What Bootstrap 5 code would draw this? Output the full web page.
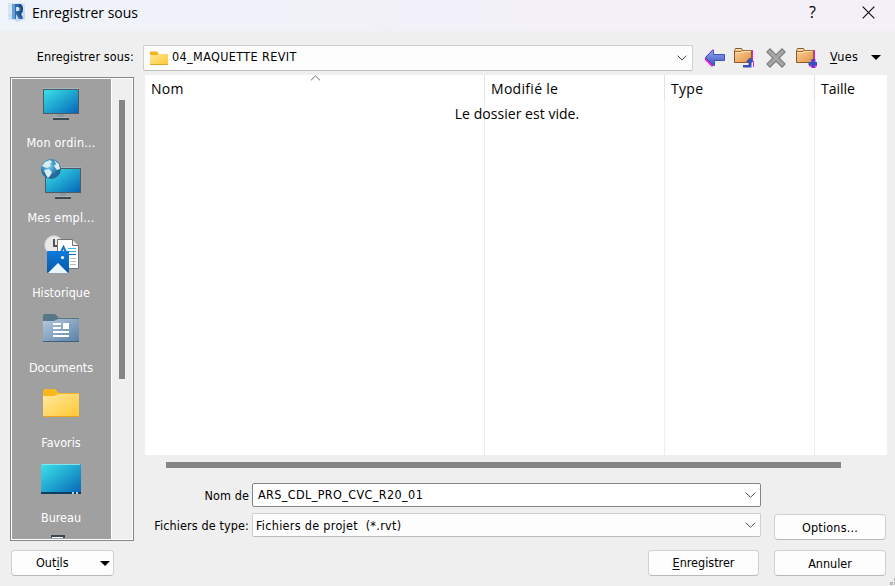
<!DOCTYPE html>
<html lang="fr">
<head>
<meta charset="utf-8">
<title>Enregistrer sous</title>
<link href="https://cdn.jsdelivr.net/npm/bootstrap@5.3.0/dist/css/bootstrap.min.css" rel="stylesheet">
<style>
body{width:895px;height:586px;background:#efefef;color:#000;font:12.5px/16px "DejaVu Sans Condensed","DejaVu Sans",sans-serif;font-stretch:condensed}
svg{display:block;flex:none}
u{text-underline-offset:2px}
.titlebar{height:31px;background:linear-gradient(90deg,#eff3fa,#f3f0f8 60%);font:14px/20px "Open Sans",sans-serif;padding-left:8px}
.titlebar .caption{margin:3px 0 0 7px}
.titlebar .help{font-size:16px;margin:2px 46px 0 0}
.pathrow{height:44px;padding-top:14px}
.lbl{text-align:right;white-space:nowrap}
.pathrow .lbl{width:134px;margin-right:9px;letter-spacing:.13px}
.combo{background:#fdfdfd;border:1px solid #cfcfcf;border-bottom-color:#bdbdbd;border-radius:2px;white-space:pre}
.path{width:550px;height:26px;padding:0 5px}
.pathtext{margin:-3px auto 0 3px;letter-spacing:.38px}
.tools{padding-left:10px}
.tools .views{margin:4px 0 0 12px;letter-spacing:.4px}
.side{width:134px;padding:2px 0 0 10px}
.places{width:124px;height:464px;border:1px solid #828790;padding:1px;background:#fff}
.placelist{width:99px;height:460px;background:#a0a0a0;color:#fff;overflow:hidden;margin-right:1px;padding-right:1px;flex:none}
.place{height:75px;flex:none;padding-top:1px}
.place span{margin-top:6px;line-height:17px}
.wider{letter-spacing:.2px}
.vtrack{width:20px;background:#efefef;padding:21px 0 0 7px}
.vthumb{width:6px;height:279px;background:#858585}
.files{width:742px;height:380px;background:#fff;margin-left:11px;font:14px/20px "Open Sans",sans-serif;letter-spacing:.3px;position:relative}
.filecol{padding:4px 6px}
.ruled{border-right:1px solid;border-image:linear-gradient(#e2e2e2 26px,#e6f0fa 26px) 1}
.empty{position:absolute;left:2px;right:0;top:29px;text-align:center;letter-spacing:.04px}
.sort{position:absolute;left:165px;top:0}
.hbar{width:675px;height:6px;background:#858585;margin:7px 0 15px 32px}
.fieldrow .lbl{width:115px;margin-right:3px;letter-spacing:.12px}
.fieldrow .lbl,.typetext{padding-top:1px}
.field{width:509px;height:24px;padding:0 4px 0 3px}
.name{background:#fff;border-color:#868686}
.nametext{margin-left:2px;letter-spacing:.38px}
.typetext{letter-spacing:.3px}
.push{--bs-btn-bg:#fdfdfd;--bs-btn-border-color:#d0d0d0;--bs-btn-color:#000;--bs-btn-border-radius:4px;font-size:12.5px;line-height:16px;padding:0;height:26px;border-bottom-color:#b9b9b9}
.wide{width:112px;padding-top:2px}
.footerrow{padding:9px 9px 0 11px}
.grip{position:absolute;right:0;bottom:0}
</style>
<script src="https://cdn.jsdelivr.net/npm/bootstrap@5.3.0/dist/js/bootstrap.bundle.min.js"></script>
</head>
<body class="overflow-hidden position-relative m-0">
<svg width="0" height="0" class="position-absolute">
<defs>
<linearGradient id="screen" x1="0" y1="0" x2="1" y2="1"><stop stop-color="#3de2e8"/><stop offset=".5" stop-color="#1fa5d0"/><stop offset="1" stop-color="#0564b8"/></linearGradient>
<linearGradient id="yellow" x1="0" y1="0" x2="1" y2="1"><stop stop-color="#ffe8a0"/><stop offset="1" stop-color="#ffc830"/></linearGradient>
<linearGradient id="slate" x1="0" y1="0" x2="1" y2="1"><stop stop-color="#b4c9dd"/><stop offset="1" stop-color="#5a7fa6"/></linearGradient>
<linearGradient id="photo" x1="0" y1="0" x2="0" y2="1"><stop stop-color="#0c7bdc"/><stop offset="1" stop-color="#0858a8"/></linearGradient>
<linearGradient id="arrow" x1="0" y1="0" x2="0" y2="1"><stop stop-color="#91a4ee"/><stop offset="1" stop-color="#3a55bf"/></linearGradient>
<linearGradient id="tan" x1="0" y1="0" x2="1" y2="1"><stop stop-color="#ffd59a"/><stop offset="1" stop-color="#df9147"/></linearGradient>
<radialGradient id="earth" cx=".4" cy=".35"><stop stop-color="#86cdf0"/><stop offset=".6" stop-color="#3c96c8"/><stop offset="1" stop-color="#266a96"/></radialGradient>
<g id="monitor"><path fill="#a5b6c0" d="M6 8h36v1H6z"/><path fill="#8b979f" d="M21 34h6v3h-6z"/><rect x="6.5" y="9.500" width="35" height="24" fill="url(#screen)" stroke="#4d5b66"/><path fill="#a9b3ba" d="M16 37h16v1H16z"/><path fill="#3d4951" d="M16 38h16v2H16z"/></g>
<g id="tanfolder"><path fill="#e51be8" d="M18 3h1v12h-1z"/><path d="M.5 15.500V3.500l1-2h6l1 2h9v12z" fill="url(#tan)" stroke="#8a592b"/><path d="M1.500 5.500h6l2-1h7M2 2.500h5" fill="none" stroke="#ffe3b8"/><path d="M1 4.500h6l1-1h9" fill="none" stroke="#a46b35"/></g>
</defs>
</svg>

<header class="titlebar d-flex align-items-start">
  <svg width="17" height="19" style="margin-top:3px"><rect width="17" height="17" fill="#d5e5f6"/><path d="M0 12l9 7 8-3V8z" fill="#c5daef"/><path fill-rule="evenodd" fill="#2c6aa9" d="M4 1h7c3 0 4 2 4 5 0 2-1 4-3 5l3 5h-4l-3-5H8v5H4zM8 4v4h2c2 0 2-4 0-4z"/><path fill="#1f4c82" d="M11 1c5 0 5 8 2 10l2 4-2-1-3-4c4-1 4-6 1-6z"/><path fill="#66a1d4" d="M4 1h3v15H4z"/></svg>
  <span class="caption">Enregistrer sous</span>
  <span class="help ms-auto">?</span>
  <svg width="13" height="13" style="margin:6px 20px 0 0"><path d="M.7.700l11.600 11.600M12.300.700L.700 12.300" stroke="#111" stroke-width="1.200"/></svg>
</header>

<div class="pathrow d-flex">
  <label class="lbl pt-1">Enregistrer sous:</label>
  <div class="combo path d-flex align-items-center">
    <svg width="20" height="16"><path d="M1 15V2h7l2 2h9v11z" fill="url(#yellow)"/><path d="M1 5V1.500h7l1.500 2L8 5z" fill="#f7b31b"/><path d="M1 14.500h18" stroke="#e5a52b"/></svg>
    <span class="pathtext">04_MAQUETTE REVIT</span>
    <svg width="10" height="6"><path d="M.7.700L5 5 9.300.700" fill="none" stroke="#505050"/></svg>
  </div>
  <div class="tools d-flex align-items-start">
    <svg width="22" height="22" style="margin-top:2px"><path d="M2 10.500L10 2l1 2v14l-2 2-7-7z" fill="#e51be8"/><path d="M2.500 10.500L9.500 3.500h1v4h11v6h-10v5h-1z" fill="url(#arrow)" stroke="#4056b5"/></svg>
    <svg width="22" height="22" style="margin:2px 0 0 9px"><use href="#tanfolder"/><path d="M13 14l3-3 4 4v5h-1v-5h-6z" fill="#e51be8"/><path d="M9 20.500v-2.500h5.500v-3H12l4-4.500 4 4.500h-2.500v5.500z" fill="#3650bb"/></svg>
    <svg width="20" height="20" style="margin:3px 0 0 10px"><path d="M4 4l12 12M16 4L4 16" stroke="#777" stroke-width="5.500" stroke-linecap="square"/><path d="M4 4l12 12M16 4L4 16" stroke="#a5a5a5" stroke-width="3.500" stroke-linecap="square"/></svg>
    <svg width="22" height="22" style="margin:2px 0 0 10px"><use href="#tanfolder"/><path d="M17.500 12v9M13 17.500h8" stroke="#e51be8" stroke-width="4"/><path d="M17 12v8.500M12.500 16.500h8.500" stroke="#3650bb" stroke-width="3"/></svg>
    <span class="views"><u>V</u>ues</span>
    <svg width="10" height="5" style="margin:10px 0 0 13px"><path d="M0 0h10L5 5z"/></svg>
  </div>
</div>

<main class="d-flex">
  <aside class="side">
    <div class="places d-flex">
      <div class="placelist d-flex flex-column">
        <div class="place d-flex flex-column align-items-center"><svg width="48" height="48"><use href="#monitor"/></svg><span class="wider">Mon ordin...</span></div>
        <div class="place d-flex flex-column align-items-center"><svg width="48" height="48"><use href="#monitor" x="2" y="4"/><circle cx="14" cy="14" r="10" fill="url(#earth)"/><path d="M8 7l5-2 2 2-2 2 1 2-4 2-3-1-2-1zM7 15l5-1 3 3-2 4-2 2-2-3zM17 5l5 4 1 5-3 1-3-4 2-2z" fill="#d9edf0"/></svg><span class="wider">Mes empl...</span></div>
        <div class="place d-flex flex-column align-items-center"><svg width="48" height="48"><circle cx="17" cy="15" r="9.500" fill="#e9e9e9" stroke="#bcbcbc"/><path d="M17 9v7h5" fill="none" stroke="#555" stroke-width="2"/><path d="M20.500 9.500h15l6 6v23h-21z" fill="#fff" stroke="#737373"/><path d="M35.500 9.500v6h6" fill="#eee" stroke="#737373"/><path d="M31 18.500h8M31 21.500h8" stroke="#35b9e9"/><path d="M31 24.500h8" stroke="#1572b5"/><path d="M33 28.500h6M33 31.500h6M33 34.500h6" stroke="#bbb"/><path d="M24 22l2.500-5 2.500 5" fill="none" stroke="#1674cb" stroke-width="2"/><rect x="10" y="21" width="22" height="22" rx="1" fill="url(#photo)"/><path d="M11 43l10-10 10 10z" fill="#e7f5ff"/><circle cx="25.500" cy="27.500" r="1.600" fill="#fff"/></svg><span>Historique</span></div>
        <div class="place d-flex flex-column align-items-center"><svg width="48" height="48"><path d="M6 16v-5q0-2 2-2h9q2 0 3 2l2 2h20v3z" fill="#587887"/><path d="M6 16h11l4-2h20q1 0 1 1v22H6z" fill="url(#slate)"/><path d="M6 36.500h36" stroke="#425e78"/><path d="M16 18h8v2h-8zM16 22h8v2h-8zM26 18h6v6h-6zM16 26h16v2H16zM16 30h16v2H16z" fill="#fff"/></svg><span>Documents</span></div>
        <div class="place d-flex flex-column align-items-center"><svg width="48" height="48"><path d="M6 16v-5q0-2 2-2h9q2 0 3 2l2 2h20v3z" fill="#f9b81e"/><path d="M6 16h11l4-2h20q1 0 1 1v22H6z" fill="url(#yellow)"/><path d="M6 36.500h36" stroke="#e6a51c"/></svg><span>Favoris</span></div>
        <div class="place d-flex flex-column align-items-center"><svg width="48" height="48"><rect x="4" y="9" width="40" height="30" rx="1" fill="url(#screen)"/><path d="M5 9.500h38" stroke="#7ee6ee"/><path d="M4 37h40v2H4z" fill="#0d405f"/><path d="M35 37h2v2h-2zM39 37h2v2h-2z" fill="#b8d4e4"/></svg><span>Bureau</span></div>
        <div class="place d-flex flex-column align-items-center"><svg width="48" height="48"><path d="M14 5h14v3H14z" fill="#3d4951"/><path d="M15 7h11v1H15z" fill="#fff"/></svg></div>
      </div>
      <div class="vtrack"><div class="vthumb"></div></div>
    </div>
  </aside>
  <section>
    <div class="files d-flex">
      <div class="filecol ruled" style="width:340px">Nom</div>
      <div class="filecol ruled" style="width:180px">Modifié le</div>
      <div class="filecol ruled" style="width:150px">Type</div>
      <div class="filecol" style="letter-spacing:0">Taille</div>
      <svg class="sort" width="11" height="6"><path d="M1 5.300L5.500 1 10 5.300" fill="none" stroke="#666"/></svg>
      <span class="empty">Le dossier est vide.</span>
    </div>
    <div class="hbar"></div>
    <div class="d-flex align-items-start">
      <div class="d-flex flex-column" style="gap:6px">
        <div class="fieldrow d-flex align-items-center"><label class="lbl">Nom de</label><div class="combo field name d-flex align-items-center justify-content-between"><span class="nametext">ARS_CDL_PRO_CVC_R20_01</span><svg width="11" height="6"><path d="M.700.700L5.500 5.300 10.300.700" fill="none" stroke="#505050"/></svg></div></div>
        <div class="fieldrow d-flex align-items-center"><label class="lbl">Fichiers de type:</label><div class="combo field d-flex align-items-center justify-content-between"><span class="typetext">Fichiers de projet  (*.rvt)</span><svg width="11" height="6"><path d="M.700.700L5.500 5.300 10.300.700" fill="none" stroke="#505050"/></svg></div></div>
      </div>
      <button class="btn push wide wider" style="margin:31px 0 0 13px">Options...</button>
    </div>
  </section>
</main>

<footer class="footerrow d-flex">
  <button class="btn push d-flex align-items-center justify-content-between" style="width:103px;padding:0 3px 0 24px"><span>Out<u>i</u>ls</span><svg width="10" height="5"><path d="M0 0h10L5 5z"/></svg></button>
  <button class="btn push ms-auto" style="width:111px;margin-right:15px"><u>E</u>nregistrer</button>
  <button class="btn push wide">Annuler</button>
</footer>
<svg class="grip" width="5" height="8"><path d="M4 0h1v3H4zM0 4h3v3H0zM4 4h1v3H4z" fill="#b5b5b5"/></svg>
</body>
</html>
